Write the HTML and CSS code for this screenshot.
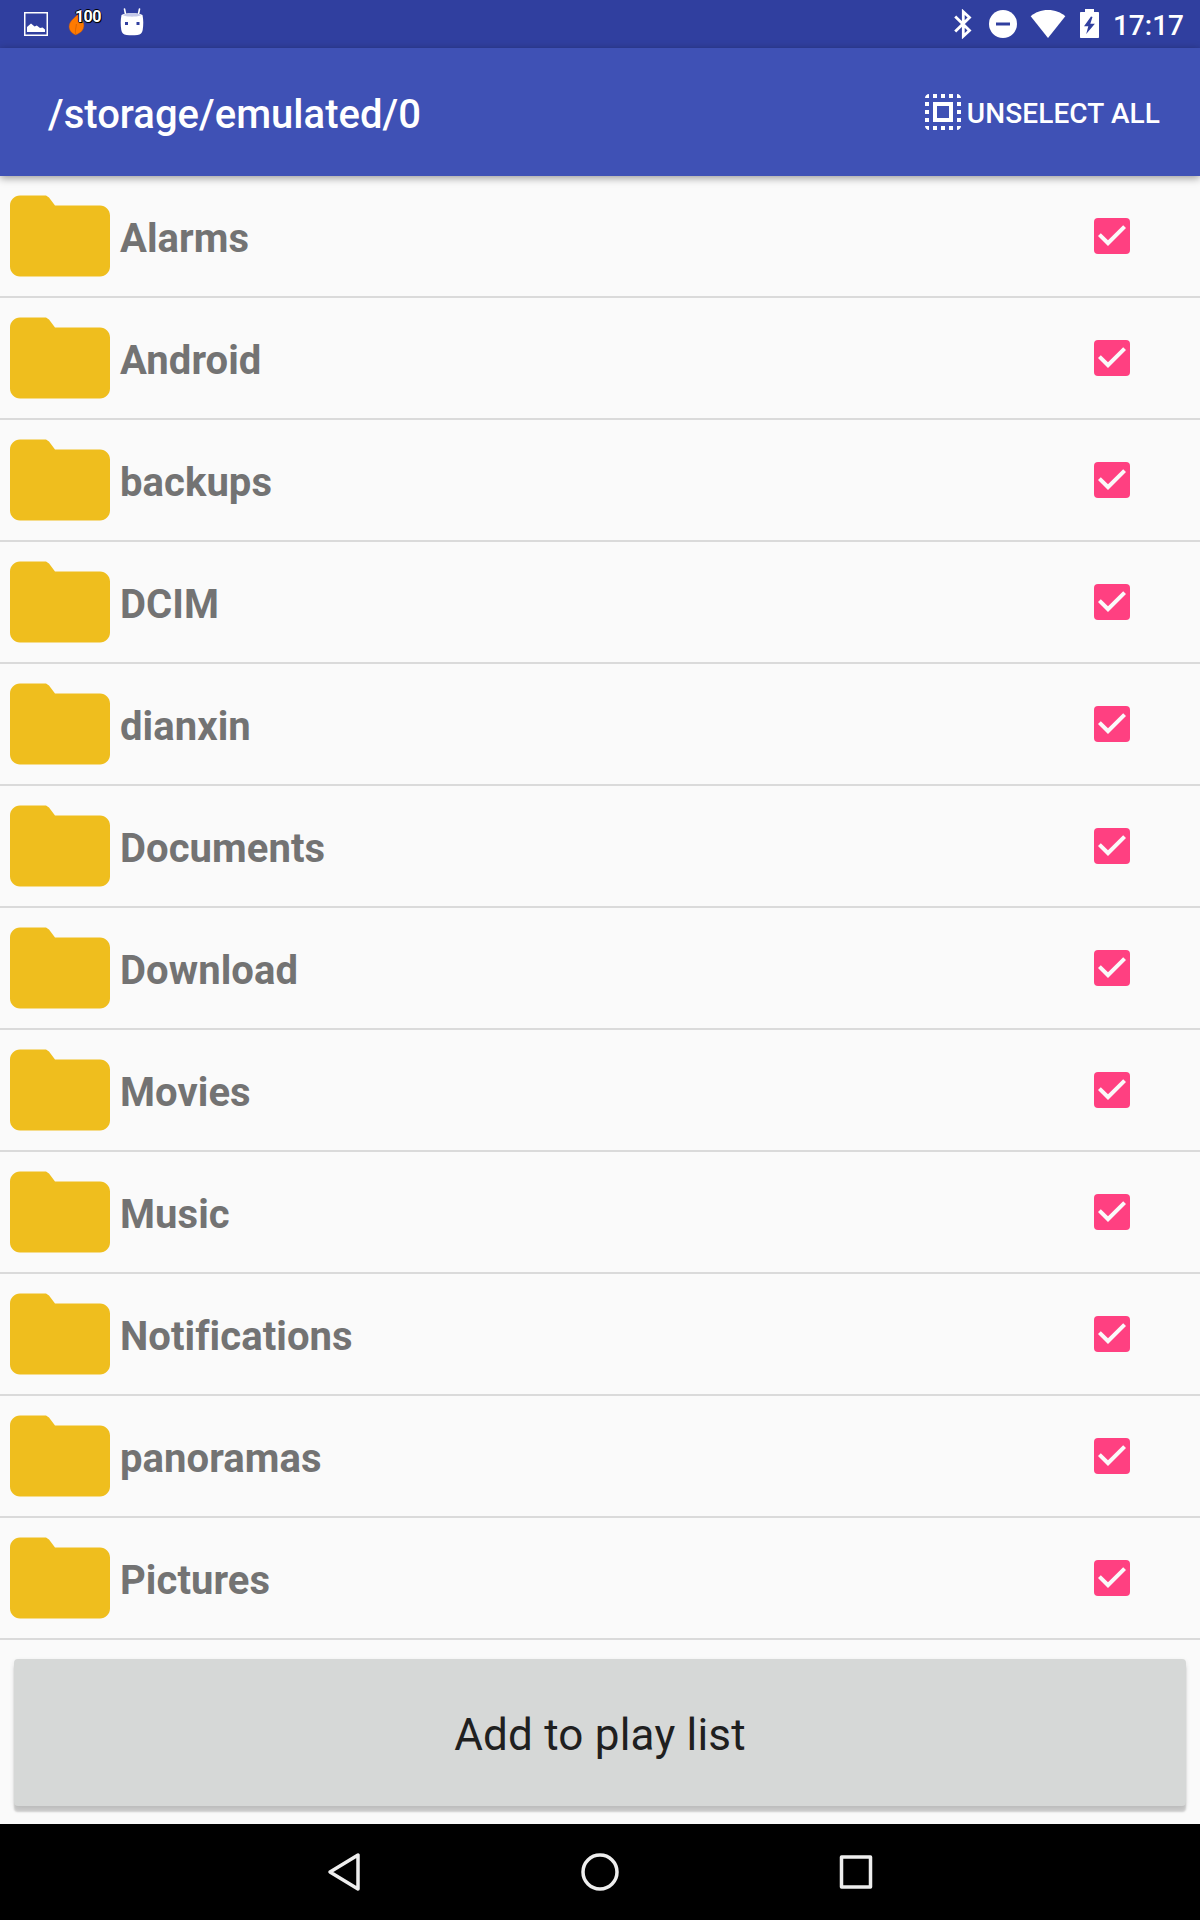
FILE: index.html
```
<!DOCTYPE html>
<html lang="en">
<head>
  <meta charset="UTF-8">
  <meta name="viewport" content="width=device-width, initial-scale=1.0">
  <title>/storage/emulated/0</title>
  <link rel="stylesheet" href="styles.css">
</head>
<body>

  <!-- Shared icons -->
  <svg class="sprite">
    <symbol id="folder" viewBox="0 0 24 24">
      <path d="M9.200 3.900H4c-1.100 0-2 .9-2 2V18.100c0 1.100.9 2 2 2h16c1.100 0 2-.9 2-2V7.900c0-1.100-.9-2-2-2h-9l-1.200-1.600z"/>
    </symbol>
    <symbol id="check" viewBox="0 0 24 24">
      <path d="M10 17l-5-5 1.410-1.410L10 14.170l7.590-7.590L19 8z"/>
    </symbol>
  </svg>

  <header class="status-bar">
    <div class="status-left">
      <svg class="icon-image" width="24" height="24" viewBox="0 0 24 24">
        <rect x="0.75" y="0.75" width="22.500" height="22.500" fill="none" stroke="#fff" stroke-width="1.500"/>
        <path d="M3 20v-5l4-3.600 3.600 3.200 2.200-1.200 3.200 2.600 2.600-.6L21 17.600V20z" fill="#fff"/>
      </svg>
      <div class="battery-app">
        <svg width="18" height="24" viewBox="0 0 18 24">
          <path d="M11 0C9 5 1 8 1 14.500c0 3.500 2 6.500 6.500 8.500C13 21 16 18 16 13c0-4-4-7-5-13z" fill="#ff7a00" stroke="#8a4a3c" stroke-width="0.500"/>
          <path d="M8 23c-1.800-4 .4-7 .4-11" fill="none" stroke="#d05f08" stroke-width="0.800"/>
        </svg>
        <span class="battery-level">100</span>
      </div>
      <svg class="icon-android" width="24" height="28" viewBox="0 0 24 28">
        <path d="M5.500 6L4.500 1M18.500 6l1-5" stroke="#fff" stroke-width="1.600" stroke-linecap="round"/>
        <path d="M1.500 7C4 4.500 20 4.500 22.500 7c1 5 1 10 .2 15-.5 3-2.200 4.600-5.200 4.900-4 .4-7 .4-11 0-3-.3-4.700-1.900-5.200-4.900C.5 17 .5 12 1.500 7z" fill="#fff"/>
        <path d="M3 7c3-2.300 15-2.300 18 0-2 2.200-16 2.200-18 0z" fill="#c5cae9"/>
        <path d="M5 14h3v3H5zM16.500 14h3v3h-3z" fill="#303f9f"/>
      </svg>
    </div>
    <div class="status-right">
      <svg class="icon-bluetooth" width="18" height="30" viewBox="0 0 18 30">
        <path d="M1.200 7.500L15.500 21.500 9.300 27.200V2.800L15.500 8.500 1.200 22.500" fill="none" stroke="#fff" stroke-width="2.800"/>
      </svg>
      <svg class="icon-dnd" width="28" height="28" viewBox="0 0 28 28">
        <circle cx="14" cy="14" r="14" fill="#fff"/>
        <path d="M7 12.500h14v3H7z" fill="#303f9f"/>
      </svg>
      <svg class="icon-wifi" width="36" height="28" viewBox="0 0 36 28">
        <path d="M18 28L.7 6.200C5 2.500 11 0 18 0s13 2.500 17.300 6.200z" fill="#fff"/>
      </svg>
      <svg class="icon-battery" width="19" height="29" viewBox="0 0 19 29">
        <path d="M5 0h9v3h4c.6 0 1 .4 1 1v24c0 .6-.4 1-1 1H1c-.6 0-1-.4-1-1V4c0-.6.4-1 1-1h4z" fill="#fff"/>
        <path d="M11 7.500l-7 9.700h4.300L6.200 25l8.700-10.300h-4.600L12.500 8z" fill="#303f9f"/>
      </svg>
      <span class="clock">17:17</span>
    </div>
  </header>

  <div class="toolbar">
    <h1 class="path">/storage/emulated/0</h1>
    <div class="action">
      <svg width="48" height="48" viewBox="0 0 24 24" fill="#fff">
        <path d="M3 5h2V3c-1.100 0-2 .9-2 2zm0 8h2v-2H3v2zm4 8h2v-2H7v2zM3 9h2V7H3v2zm10-6h-2v2h2V3zm6 0v2h2c0-1.100-.9-2-2-2zM5 21v-2H3c0 1.100.9 2 2 2zm-2-4h2v-2H3v2zM9 3H7v2h2V3zm2 18h2v-2h-2v2zm8-8h2v-2h-2v2zm0 8c1.100 0 2-.9 2-2h-2v2zm0-12h2V7h-2v2zm0 8h2v-2h-2v2zm-4 4h2v-2h-2v2zm0-16h2V3h-2v2zM7 17h10V7H7v10zm2-8h6v6H9V9z"/>
      </svg>
      <span>UNSELECT ALL</span>
    </div>
  </div>

  <ul class="folders">
    <li class="row"><svg class="folder"><use href="#folder"/></svg><span class="name">Alarms</span><span class="checkbox"><svg><use href="#check"/></svg></span></li>
    <li class="row"><svg class="folder"><use href="#folder"/></svg><span class="name">Android</span><span class="checkbox"><svg><use href="#check"/></svg></span></li>
    <li class="row"><svg class="folder"><use href="#folder"/></svg><span class="name">backups</span><span class="checkbox"><svg><use href="#check"/></svg></span></li>
    <li class="row"><svg class="folder"><use href="#folder"/></svg><span class="name">DCIM</span><span class="checkbox"><svg><use href="#check"/></svg></span></li>
    <li class="row"><svg class="folder"><use href="#folder"/></svg><span class="name">dianxin</span><span class="checkbox"><svg><use href="#check"/></svg></span></li>
    <li class="row"><svg class="folder"><use href="#folder"/></svg><span class="name">Documents</span><span class="checkbox"><svg><use href="#check"/></svg></span></li>
    <li class="row"><svg class="folder"><use href="#folder"/></svg><span class="name">Download</span><span class="checkbox"><svg><use href="#check"/></svg></span></li>
    <li class="row"><svg class="folder"><use href="#folder"/></svg><span class="name">Movies</span><span class="checkbox"><svg><use href="#check"/></svg></span></li>
    <li class="row"><svg class="folder"><use href="#folder"/></svg><span class="name">Music</span><span class="checkbox"><svg><use href="#check"/></svg></span></li>
    <li class="row"><svg class="folder"><use href="#folder"/></svg><span class="name">Notifications</span><span class="checkbox"><svg><use href="#check"/></svg></span></li>
    <li class="row"><svg class="folder"><use href="#folder"/></svg><span class="name">panoramas</span><span class="checkbox"><svg><use href="#check"/></svg></span></li>
    <li class="row"><svg class="folder"><use href="#folder"/></svg><span class="name">Pictures</span><span class="checkbox"><svg><use href="#check"/></svg></span></li>
  </ul>

  <div class="footer">
    <button class="add-btn">Add to play list</button>
  </div>

  <nav class="nav-bar">
    <svg width="48" height="48" viewBox="0 0 48 48"><path d="M38 7v34L10 24z"/></svg>
    <svg width="48" height="48" viewBox="0 0 48 48"><circle cx="24" cy="24" r="17"/></svg>
    <svg width="48" height="48" viewBox="0 0 48 48"><rect x="9.500" y="9" width="29" height="30"/></svg>
  </nav>

</body>
</html>
```
FILE: styles.css
```
* {
  box-sizing: border-box;
}

body {
  margin: 0;
  width: 1200px;
  height: 1920px;
  display: flex;
  flex-direction: column;
  background: #fafafa;
  font-family: Roboto, sans-serif;
}

svg {
  display: block;
  flex-shrink: 0;
}

.sprite {
  display: none;
}

/* Status bar */
.status-bar {
  height: 48px;
  display: flex;
  justify-content: space-between;
  background: #303f9f;
  color: #fff;
}

.status-left,
.status-right {
  display: flex;
  align-items: center;
}

.status-left {
  padding-left: 24px;
}

.battery-app {
  position: relative;
  margin-left: 20px;
}

.battery-level {
  position: absolute;
  left: 7px;
  top: -5px;
  font-size: 16px;
  font-weight: bold;
  line-height: 20px;
  letter-spacing: -0.6px;
  text-shadow: 1px 1px 0 #000, -1px 0 0 #000, 0 -1px 0 #000, 0 1px 1px #000;
}

.icon-android {
  margin: -4px 0 0 34px;
}

.status-right {
  padding-right: 16px;
}

.icon-dnd {
  margin-left: 17px;
}

.icon-wifi {
  margin-left: 13px;
}

.icon-battery {
  margin: -1px 0 0 14px;
}

.clock {
  margin-left: 14px;
  padding-top: 3px;
  font-size: 28px;
  font-weight: 500;
  line-height: 32px;
}

/* Toolbar */
.toolbar {
  position: relative;
  height: 128px;
  padding: 0 40px 0 48px;
  display: flex;
  align-items: center;
  justify-content: space-between;
  background: #3f51b5;
  color: #fff;
  box-shadow: 0 2px 8px rgba(0, 0, 0, 0.4);
}

.path {
  margin: 6px 0 0;
  font-size: 40px;
  font-weight: 500;
  line-height: 48px;
  letter-spacing: 0.03px;
}

.action {
  display: flex;
  align-items: center;
  font-size: 28px;
  font-weight: 500;
  line-height: 32px;
  letter-spacing: 0.1px;
}

.action span {
  padding-top: 4px;
}

/* Folder list */
.folders {
  margin: 0;
  padding: 0;
  list-style: none;
}

.row {
  height: 122px;
  padding-right: 70px;
  display: flex;
  align-items: center;
  border-bottom: 2px solid #dadada;
}

.folder {
  width: 120px;
  height: 120px;
  fill: #efbe1e;
}

.name {
  flex: 1;
  padding-top: 6px;
  color: #737373;
  font-size: 40px;
  font-weight: bold;
  line-height: 48px;
  letter-spacing: 0.07px;
}

.checkbox {
  width: 36px;
  height: 36px;
  display: flex;
  align-items: center;
  justify-content: center;
  border-radius: 4px;
  background: #ff4081;
}

.checkbox svg {
  width: 48px;
  height: 48px;
  fill: #fafafa;
}

/* Bottom button */
.footer {
  flex: 1;
  padding: 19px 14px 13px;
}

.add-btn {
  display: block;
  width: 100%;
  height: 147px;
  padding: 4px 0 0;
  border: none;
  border-radius: 4px;
  background: #d6d8d7;
  box-shadow: 0 6px 2px rgba(0, 0, 0, 0.18), 0 2px 5px rgba(0, 0, 0, 0.1);
  color: #1f2020;
  font-family: inherit;
  font-size: 44px;
  letter-spacing: 0.2px;
}

/* System navigation */
.nav-bar {
  height: 96px;
  display: flex;
  align-items: center;
  justify-content: center;
  gap: 208px;
  background: #000;
}

.nav-bar svg {
  fill: none;
  stroke: #eee;
  stroke-width: 3.5;
  stroke-linejoin: round;
}
```
